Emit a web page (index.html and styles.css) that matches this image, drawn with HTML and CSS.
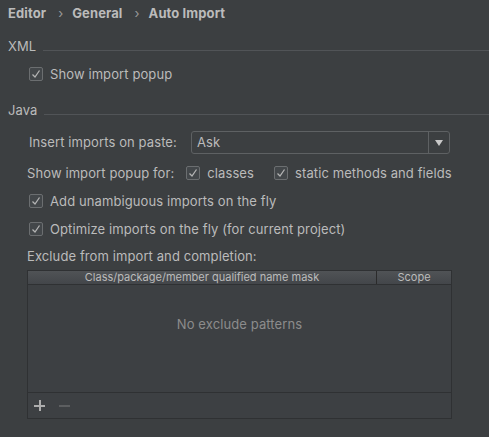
FILE: index.html
```html
<!DOCTYPE html>
<html>
<head>
<meta charset="utf-8">
<link rel="stylesheet" href="styles.css">
</head>
<body>
<div class="page">
  <div class="crumbs">
    <span>Editor</span><span class="sep">›</span><span>General</span><span class="sep">›</span><span>Auto Import</span>
  </div>

  <div class="section-title t-xml"><span>XML</span><div class="rule"></div></div>
  <div class="row r-xml indent">
    <span class="cb"><svg viewBox="0 0 14 14" width="14" height="14"><polyline points="3.5,7.5 6,10 10.5,3.5" /></svg></span>
    <span class="lbl">Show import popup</span>
  </div>

  <div class="section-title t-java"><span>Java</span><div class="rule"></div></div>

  <div class="row r-paste indent2">
    <span class="lbl">Insert imports on paste:</span>
    <div class="combo"><span class="combo-val">Ask</span><span class="combo-btn"><span class="tri"></span></span></div>
  </div>

  <div class="row r-for indent3">
    <span class="lbl">Show import popup for:</span>
    <span class="cb cb-classes"><svg viewBox="0 0 14 14" width="14" height="14"><polyline points="3.5,7.5 6,10 10.5,3.5" /></svg></span>
    <span class="lbl">classes</span>
    <span class="cb cb-static"><svg viewBox="0 0 14 14" width="14" height="14"><polyline points="3.5,7.5 6,10 10.5,3.5" /></svg></span>
    <span class="lbl">static methods and fields</span>
  </div>

  <div class="row r-std indent">
    <span class="cb"><svg viewBox="0 0 14 14" width="14" height="14"><polyline points="3.5,7.5 6,10 10.5,3.5" /></svg></span>
    <span class="lbl">Add unambiguous imports on the fly</span>
  </div>

  <div class="row r-std indent">
    <span class="cb"><svg viewBox="0 0 14 14" width="14" height="14"><polyline points="3.5,7.5 6,10 10.5,3.5" /></svg></span>
    <span class="lbl">Optimize imports on the fly (for current project)</span>
  </div>

  <div class="row r-exclude indent3">
    <span class="lbl">Exclude from import and completion:</span>
  </div>

  <div class="table">
    <div class="thead">
      <div class="th th-name">Class/package/member qualified name mask</div>
      <div class="th th-scope">Scope</div>
    </div>
    <div class="tbody">No exclude patterns</div>
    <div class="tfoot">
      <span class="icon-plus"></span>
      <span class="icon-minus"></span>
    </div>
  </div>
</div>
</body>
</html>
```

FILE: styles.css
```css
html, body {
  margin: 0;
  padding: 0;
  background: #3c3f41;
}
body {
  width: 489px;
  height: 437px;
  overflow: hidden;
  font-family: "Inter", "Liberation Sans", sans-serif;
  font-size: 13px;
  letter-spacing: 0.1px;
  color: #bbbbbb;
}
.page {
  display: flex;
  flex-direction: column;
}
.crumbs {
  height: 26px;
  line-height: 26px;
  padding-left: 8px;
  font-weight: 700;
  letter-spacing: 0.1px;
  display: flex;
  white-space: nowrap;
}
.crumbs .sep {
  font-weight: 400;
  color: #9a9a9a;
  margin: 0 9px 0 12px;
}
.section-title {
  display: flex;
  align-items: center;
  height: 18px;
  padding-left: 8px;
}
.section-title .rule {
  flex: 1;
  height: 1px;
  background: #515457;
  margin-left: 7px;
  margin-top: 8px;
}
.t-xml { margin-top: 11px; }
.t-java { margin-top: 16px; }
.row {
  display: flex;
  align-items: center;
  height: 22px;
  white-space: nowrap;
}
.indent { padding-left: 29px; }
.indent2 { padding-left: 29px; }
.indent3 { padding-left: 27px; }
.r-xml { margin-top: 8px; }
.r-paste { margin-top: 12px; }
.r-for { margin-top: 9px; }
.r-std { margin-top: 6px; }
.r-exclude { margin-top: 6px; height: 20px; }
.cb {
  width: 14px;
  height: 14px;
  box-sizing: border-box;
  border: 1px solid #6b6e70;
  border-radius: 2px;
  background: #43474a;
  margin-right: 7px;
  position: relative;
  flex: none;
}
.cb svg {
  position: absolute;
  left: -1px;
  top: -1px;
}
.cb polyline {
  fill: none;
  stroke: #b4b4b4;
  stroke-width: 1.3;
}
.cb-classes { margin-left: 12px; }
.cb-static { margin-left: 20px; }
.combo {
  margin-left: 14px;
  width: 259px;
  height: 23px;
  box-sizing: border-box;
  border: 1px solid #5e6163;
  border-radius: 3px;
  display: flex;
  align-items: center;
}
.combo-val {
  flex: 1;
  padding-left: 5px;
}
.combo-btn {
  width: 20px;
  height: 100%;
  border-left: 1px solid #5e6163;
  display: flex;
  align-items: center;
  justify-content: center;
}
.tri {
  width: 0;
  height: 0;
  border-left: 4px solid transparent;
  border-right: 4px solid transparent;
  border-top: 6px solid #c8c8c8;
  margin-top: 1px;
}
.table {
  margin-top: 4px;
  margin-left: 27px;
  width: 425px;
  height: 149px;
  box-sizing: border-box;
  border: 1px solid #2f3133;
  display: flex;
  flex-direction: column;
  background: #3d4043;
}
.thead {
  display: flex;
  height: 13px;
  border-bottom: 1px solid #2f3133;
  background: linear-gradient(#505356, #43464a);
  font-size: 11px;
  line-height: 13px;
  letter-spacing: 0;
  color: #bbbbbb;
}
.th { text-align: center; white-space: nowrap; }
.th-name {
  width: 348px;
  border-right: 1px solid #2b2b2b;
}
.th-scope { flex: 1; }
.tbody {
  height: 108px;
  box-sizing: border-box;
  padding-top: 31px;
  line-height: 16px;
  text-align: center;
  color: #8c8c8c;
  border-bottom: 1px solid #2f3133;
}
.tfoot {
  flex: 1;
  display: flex;
  align-items: center;
  padding-left: 6px;
}
.icon-plus {
  width: 11px;
  height: 11px;
  position: relative;
  margin-right: 14px;
}
.icon-plus::before, .icon-plus::after {
  content: "";
  position: absolute;
  background: #adadad;
}
.icon-plus::before { left: 0; top: 4.5px; width: 11px; height: 2px; }
.icon-plus::after { left: 4.5px; top: 0; width: 2px; height: 11px; }
.icon-minus {
  width: 11px;
  height: 2px;
  background: #5c5e60;
}
```
